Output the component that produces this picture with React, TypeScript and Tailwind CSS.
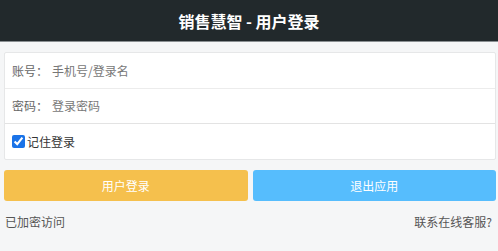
import React from "react";

const font = { fontFamily: '"Noto Sans CJK SC", "Liberation Sans", sans-serif' };

export default function App() {
  return (
    <div
      className="w-[498px] h-[251px] bg-[#f5f6f7] overflow-hidden"
      style={font}
    >
      <header className="h-[42px] bg-[#22292c] border-b border-[#8a8f92] flex items-center justify-center">
        <h1 className="text-white text-[16px] font-bold leading-none">
          销售慧智 - 用户登录
        </h1>
      </header>

      <div className="ml-[4px] mr-[2px] mt-[10px] bg-white border border-[#e6e7e8] rounded-[2px]">
        <div className="h-[36px] flex items-center px-[7px] border-b border-[#ececec]">
          <span className="text-[12px] text-[#666] w-[40px]">账号：</span>
          <input
            className="flex-1 text-[12px] outline-none placeholder:text-[#777]"
            placeholder="手机号/登录名"
          />
        </div>
        <div className="h-[35px] flex items-center px-[7px] border-b border-[#e3e3e3]">
          <span className="text-[12px] text-[#666] w-[40px]">密码：</span>
          <input
            type="password"
            className="flex-1 text-[12px] outline-none placeholder:text-[#777]"
            placeholder="登录密码"
          />
        </div>
        <label className="h-[35px] flex items-center px-[7px] gap-[2px]">
          <input
            type="checkbox"
            defaultChecked
            className="w-[13px] h-[13px] m-0 accent-[#1a73e8]"
          />
          <span className="text-[12px] text-[#333]">记住登录</span>
        </label>
      </div>

      <div className="ml-[4px] mr-[2px] mt-[10px] flex gap-[5px]">
        <button className="flex-1 h-[31px] rounded-[3px] bg-[#f5c04d] text-white text-[12px]">
          用户登录
        </button>
        <button className="flex-1 h-[31px] rounded-[3px] bg-[#56bdfd] text-white text-[12px]">
          退出应用
        </button>
      </div>

      <div className="ml-[5px] mr-[6px] mt-[12px] flex justify-between text-[12px] text-[#555]">
        <span>已加密访问</span>
        <span>联系在线客服?</span>
      </div>
    </div>
  );
}
